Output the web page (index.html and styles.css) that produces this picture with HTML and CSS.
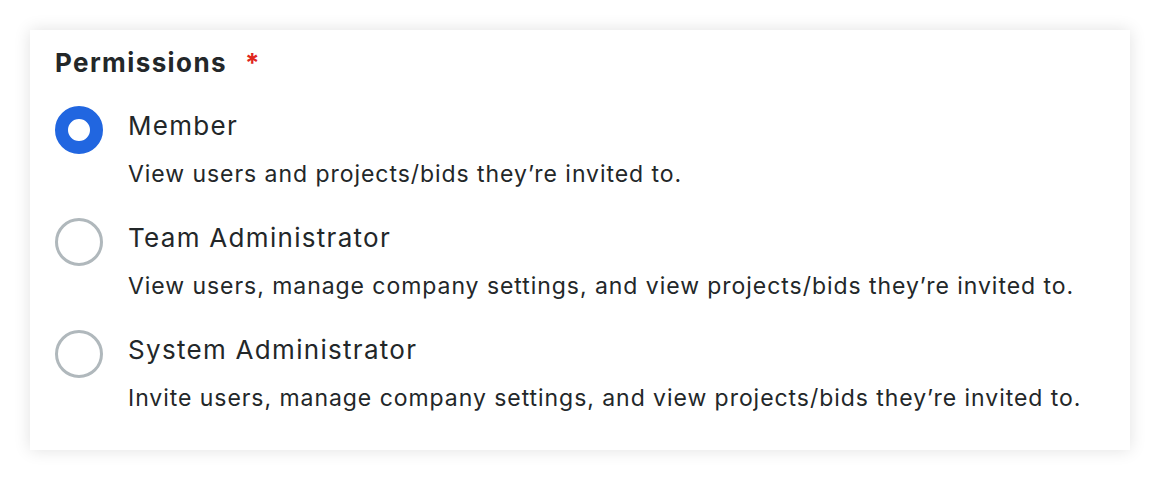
FILE: index.html
```html
<!DOCTYPE html>
<html lang="en">
<head>
    <meta charset="UTF-8">
    <title>Permissions</title>
    <link rel="stylesheet" href="styles.css">
</head>
<body>
    <div class="card">
        <div class="title">Permissions<span class="req">*</span></div>
        <div class="option">
            <span class="radio checked"></span>
            <div class="text">
                <div class="label">Member</div>
                <div class="desc">View users and projects/bids they’re invited to.</div>
            </div>
        </div>
        <div class="option">
            <span class="radio"></span>
            <div class="text">
                <div class="label">Team Administrator</div>
                <div class="desc">View users, manage company settings, and view projects/bids they’re invited to.</div>
            </div>
        </div>
        <div class="option">
            <span class="radio"></span>
            <div class="text">
                <div class="label">System Administrator</div>
                <div class="desc">Invite users, manage company settings, and view projects/bids they’re invited to.</div>
            </div>
        </div>
    </div>
</body>
</html>
```

FILE: styles.css
```css
body {
    margin: 0;
    padding: 30px;
    background: #fff;
    font-family: Inter, "Noto Sans", sans-serif;
    color: #232729;
}

.card {
    width: 1100px;
    height: 420px;
    box-sizing: border-box;
    padding: 17px 25px;
    background: #fff;
    box-shadow: 0 0 16px rgba(0, 0, 0, 0.12);
}

.title {
    font-size: 26px;
    font-weight: 700;
    line-height: 32px;
    letter-spacing: 1.4px;
    margin-bottom: 27px;
}

.req {
    color: #e0261d;
    margin-left: 18px;
}

.option {
    display: flex;
    gap: 25px;
    height: 112px;
}

.radio {
    width: 48px;
    height: 48px;
    box-sizing: border-box;
    border-radius: 50%;
    border: 3px solid #b0b8bc;
    flex-shrink: 0;
}

.radio.checked {
    border: 13px solid #2166e0;
}

.label {
    font-size: 26px;
    line-height: 40px;
    letter-spacing: 1.3px;
}

.desc {
    font-size: 23px;
    line-height: 32px;
    letter-spacing: 0.95px;
    margin-top: 12px;
}
```
